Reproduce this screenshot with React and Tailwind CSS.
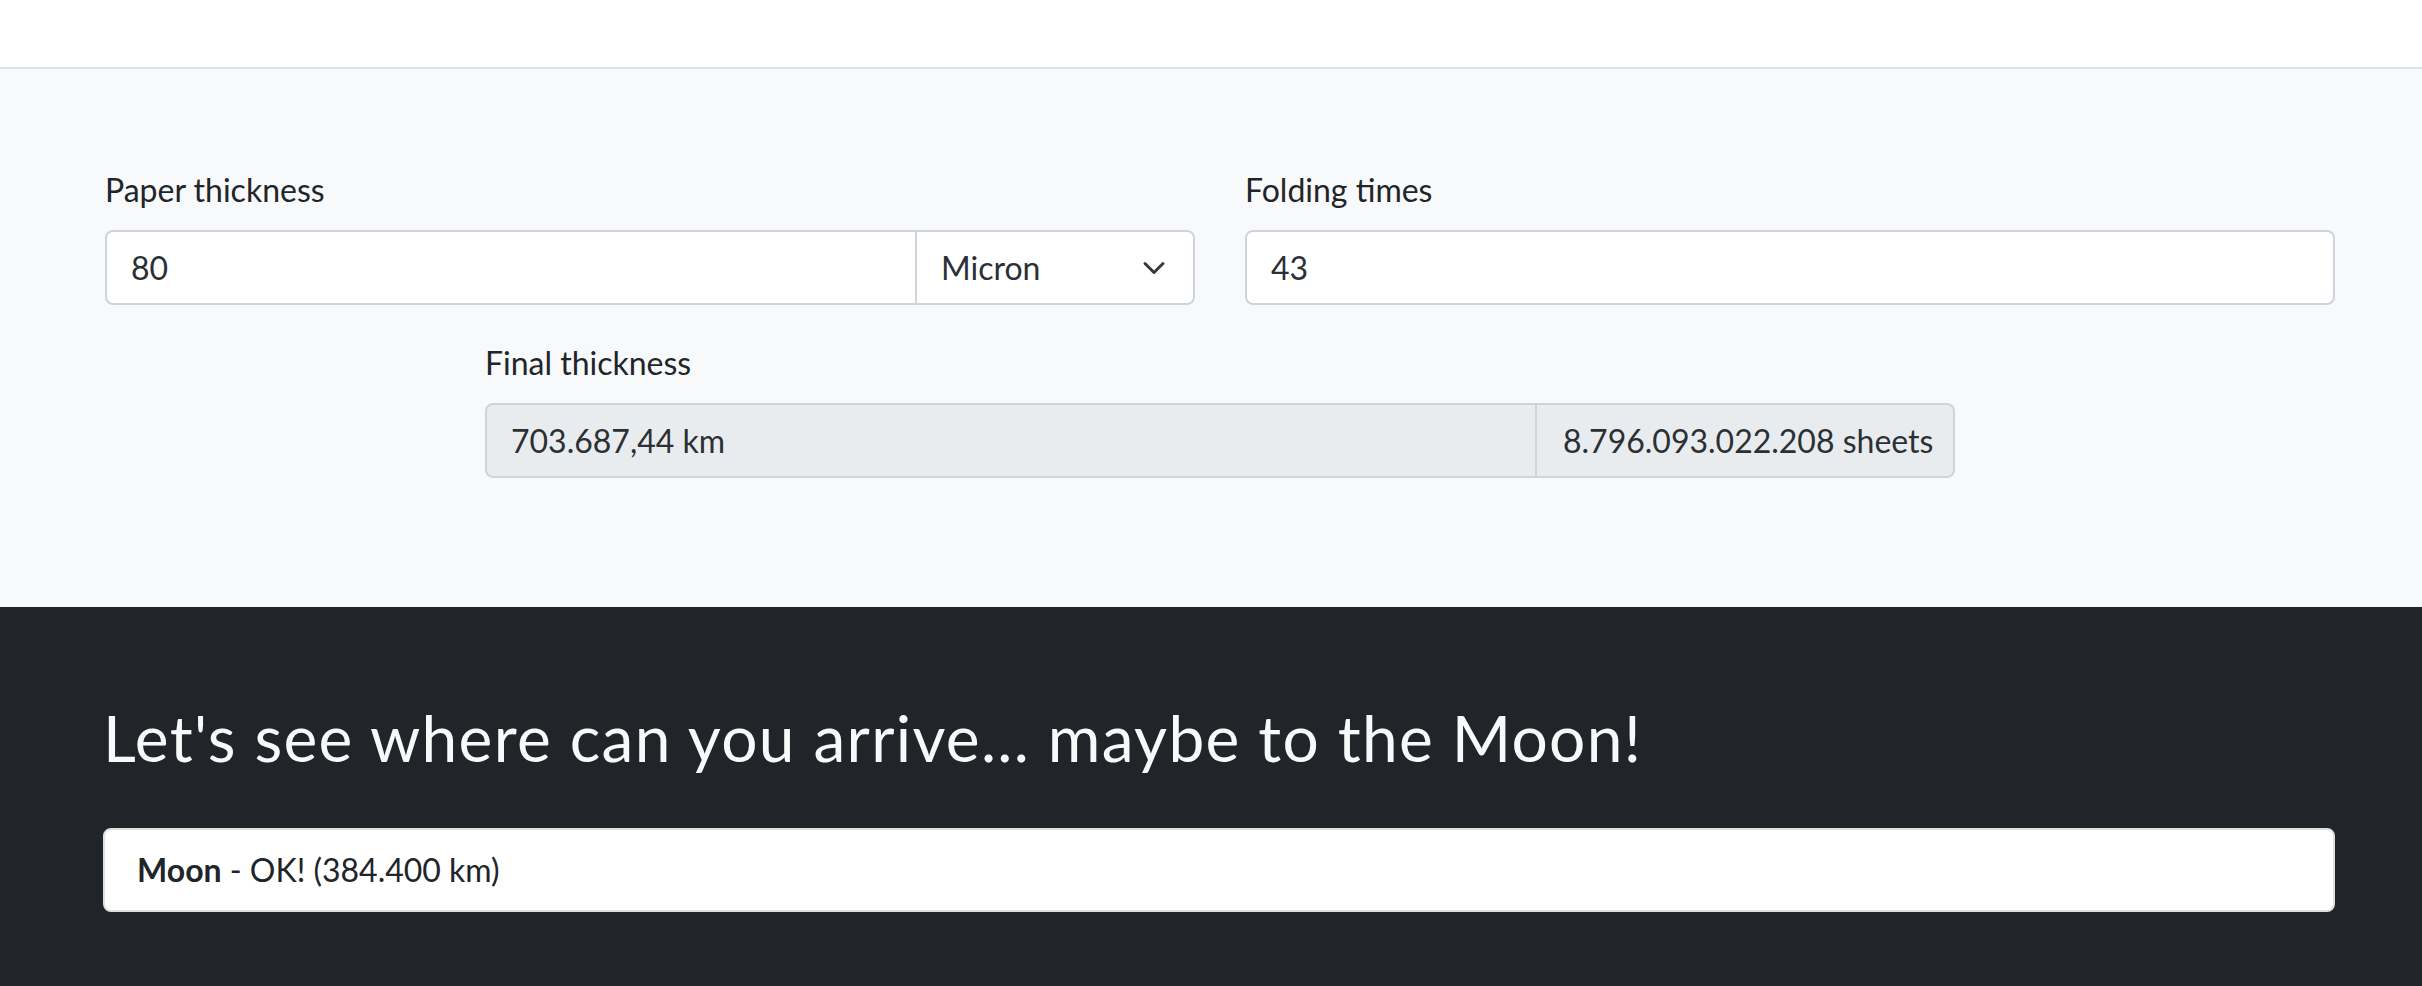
import React from 'react';

const font = { fontFamily: 'Lato, "Noto Sans", sans-serif' };

const Chevron = () => (
  <svg width="24" height="18" viewBox="0 0 16 12" fill="none" className="shrink-0">
    <path d="M2 3l6 6 6-6" stroke="#343a40" strokeWidth="2" strokeLinecap="round" strokeLinejoin="round" />
  </svg>
);

export default function App() {
  return (
    <div className="min-h-[986px] bg-[#212529]" style={font}>
      {/* Top bar */}
      <header className="h-[69px] bg-white border-b-2 border-[#dee2e6]" />

      {/* Calculator */}
      <section className="bg-[#f8f9fa] pt-[97px] pb-[129px] pl-[105px] pr-[87px] text-[#212529]">
        <div className="grid grid-cols-2 gap-[50px]">
          <div>
            <label className="block text-[32px] leading-[48px] mb-[16px]">Paper thickness</label>
            <div className="flex h-[75px]">
              <div className="flex-1 flex items-center bg-white border-2 border-[#ced4da] rounded-l-[8px] px-[24px] text-[32px] text-[#2b3035]">
                80
              </div>
              <div className="w-[278px] flex items-center justify-between bg-white border-2 border-l-0 border-[#ced4da] rounded-r-[8px] pl-[24px] pr-[27px] text-[32px] text-[#2b3035]">
                <span>Micron</span>
                <Chevron />
              </div>
            </div>
          </div>
          <div>
            <label className="block text-[32px] leading-[48px] mb-[16px]">Folding times</label>
            <div className="h-[75px] flex items-center bg-white border-2 border-[#ced4da] rounded-[8px] px-[24px] text-[32px] text-[#2b3035]">
              43
            </div>
          </div>
        </div>

        <div className="mt-[34px] ml-[380px] mr-[380px]">
          <label className="block text-[32px] leading-[48px] mb-[16px]">Final thickness</label>
          <div className="flex h-[75px] text-[32px] text-[#2b3035]">
            <div className="flex-1 flex items-center bg-[#e9ecef] border-2 border-[#ced4da] rounded-l-[8px] px-[24px]">
              703.687,44 km
            </div>
            <div className="w-[418px] flex items-center bg-[#e9ecef] border-2 border-l-0 border-[#ced4da] rounded-r-[8px] pl-[26px] pr-[24px] whitespace-nowrap">
              8.796.093.022.208 sheets
            </div>
          </div>
        </div>
      </section>

      {/* Destinations */}
      <section className="pt-[92px] pl-[103px] pr-[87px] pb-[60px]">
        <h2 className="text-[64px] leading-[77px] tracking-[1.3px] text-[#f8f9fa] mb-[52px]">
          Let's see where can you arrive... maybe to the Moon!
        </h2>
        <div className="bg-white border-2 border-[#dfe0e1] rounded-[8px] px-[32px] py-[16px] text-[32px] leading-[48px] text-[#212529]">
          <strong className="font-bold">Moon</strong> - OK! (384.400 km)
        </div>
      </section>
    </div>
  );
}
